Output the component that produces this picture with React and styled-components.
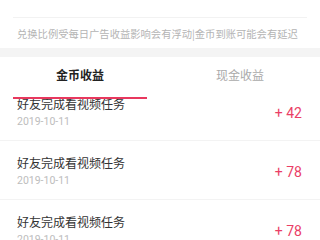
import React, { useState } from "react";
import styled, { createGlobalStyle } from "styled-components";

const GlobalStyle = createGlobalStyle`
  html, body {
    margin: 0;
    padding: 0;
    background: #fff;
  }
  body {
    font-family: Roboto, "Noto Sans CJK SC", "Noto Sans", sans-serif;
    -webkit-font-smoothing: antialiased;
  }
`;

const records = [
  { id: 1, title: "好友完成看视频任务", date: "2019-10-11", amount: 42 },
  { id: 2, title: "好友完成看视频任务", date: "2019-10-11", amount: 78 },
  { id: 3, title: "好友完成看视频任务", date: "2019-10-11", amount: 78 },
  { id: 4, title: "好友完成看视频任务", date: "2019-10-11", amount: 36 },
];

const tabs = ["金币收益", "现金收益"];

const Page = styled.div`
  width: 320px;
  height: 240px;
  overflow: hidden;
  display: flex;
  flex-direction: column;
  background: #fff;
`;

const Notice = styled.div`
  margin: 17px 13px 0;
  border-top: 1px solid #f2f2f2;
  height: 30px;
  display: flex;
  align-items: center;
  padding-left: 4px;
  font-family: "Noto Sans CJK SC", sans-serif;
  font-size: 10.3px;
  color: #b4b4b4;
  white-space: nowrap;
`;

const Gap = styled.div`
  height: 9px;
  background: #f4f4f4;
`;

const TabBar = styled.div`
  display: flex;
  height: 42px;
  background: #fff;
  position: relative;
  z-index: 1;
`;

const Tab = styled.div`
  flex: 1;
  display: flex;
  flex-direction: column;
  align-items: center;
  justify-content: flex-end;
  font-family: "Noto Sans CJK SC", sans-serif;
  font-size: 12px;
  font-weight: ${(p) => (p.$active ? 700 : 400)};
  color: ${(p) => (p.$active ? "#222" : "#aaa")};
  cursor: pointer;
`;

const TabLabel = styled.span`
  line-height: 18px;
  margin-bottom: 13px;
`;

const Indicator = styled.div`
  align-self: stretch;
  margin: 0 13px;
  height: 2px;
  background: ${(p) => (p.$active ? "#e8385e" : "transparent")};
`;

const Viewport = styled.div`
  flex: 1;
  overflow: hidden;
`;

const List = styled.div`
  margin-top: -17px;
`;

const Row = styled.div`
  display: flex;
  align-items: center;
  height: 59px;
  padding: 0 17px;
  box-sizing: border-box;
  border-bottom: 1px solid #f3f3f3;
`;

const Info = styled.div`
  flex: 1;
  display: flex;
  flex-direction: column;
  margin-top: 1px;
`;

const Title = styled.div`
  font-family: "Noto Sans CJK SC", sans-serif;
  font-size: 12px;
  line-height: 17px;
  color: #333;
`;

const Date = styled.div`
  margin-top: 2px;
  font-family: Roboto, sans-serif;
  font-size: 10.5px;
  line-height: 15px;
  color: #bdbdbd;
`;

const Amount = styled.div`
  font-family: Roboto, sans-serif;
  font-size: 14px;
  color: #ea3e66;
  margin-top: 3px;
  margin-right: 1px;
`;

export default function App() {
  const [active, setActive] = useState(0);

  return (
    <Page>
      <GlobalStyle />
      <Notice>兑换比例受每日广告收益影响会有浮动|金币到账可能会有延迟</Notice>
      <Gap />
      <TabBar>
        {tabs.map((t, i) => (
          <Tab key={t} $active={active === i} onClick={() => setActive(i)}>
            <TabLabel>{t}</TabLabel>
            <Indicator $active={active === i} />
          </Tab>
        ))}
      </TabBar>
      <Viewport>
        <List>
          {records.map((r) => (
            <Row key={r.id}>
              <Info>
                <Title>{r.title}</Title>
                <Date>{r.date}</Date>
              </Info>
              <Amount>+ {r.amount}</Amount>
            </Row>
          ))}
        </List>
      </Viewport>
    </Page>
  );
}
